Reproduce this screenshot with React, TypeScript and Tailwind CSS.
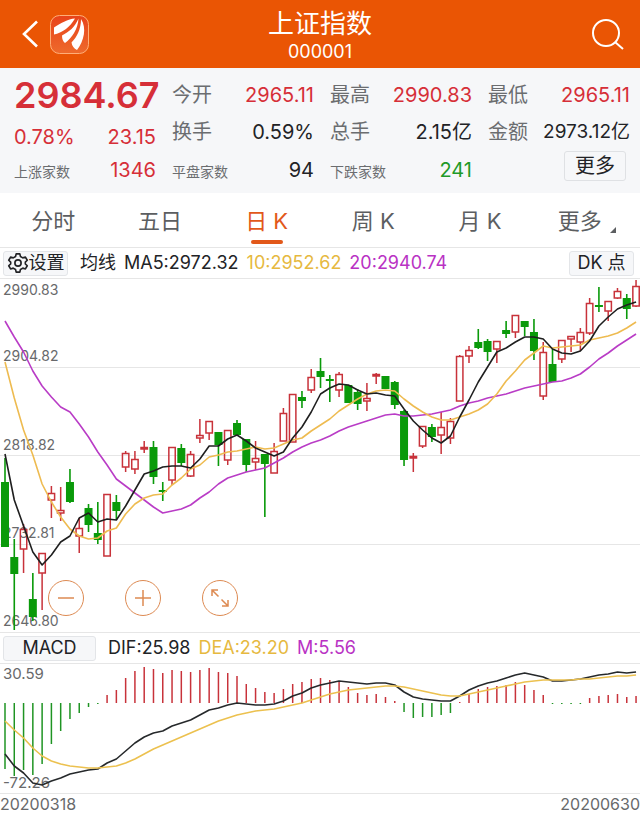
import React from 'react';

// [direction, high, body top, body bottom, low], in chart units
type Candle = ['up' | 'down', number, number, number, number];

const STEP = 9.28;
const xAt = (i: number) => 5 + i * STEP;

const candles: Candle[] = [
  ['down', 180, 204, 269, 269], ['down', 261, 279, 296, 352], ['up', 246, 251, 271, 295], ['down', 295, 321, 339, 343],
  ['up', 275, 275, 295, 332], ['up', 208, 215, 222, 240], ['up', 209, 232, 235, 243], ['down', 191, 204, 224, 225],
  ['up', 240, 250, 258, 275], ['down', 226, 230, 247, 254], ['down', 224, 255, 262, 266], ['up', 216, 216, 278, 278],
  ['down', 217, 224, 233, 242], ['up', 173, 175, 189, 194], ['up', 173, 181, 191, 196], ['up', 163, 169, 171, 175],
  ['down', 163, 169, 199, 206], ['down', 204, 212, 214, 223], ['up', 169, 169, 202, 207], ['down', 166, 170, 185, 188],
  ['up', 173, 176, 198, 199], ['up', 141, 157, 160, 165], ['up', 143, 143, 155, 162], ['down', 154, 154, 167, 188],
  ['up', 152, 152, 182, 187], ['down', 142, 145, 157, 157], ['down', 161, 161, 187, 194], ['up', 163, 180, 184, 192],
  ['down', 176, 176, 186, 239], ['up', 165, 173, 195, 195], ['up', 130, 135, 163, 163], ['up', 116, 116, 164, 164],
  ['down', 113, 119, 123, 130], ['up', 91, 99, 112, 115], ['down', 80, 93, 99, 110], ['down', 97, 101, 103, 124],
  ['up', 94, 96, 112, 119], ['down', 107, 107, 125, 125], ['down', 111, 114, 126, 132], ['up', 105, 120, 123, 133],
  ['up', 95, 96, 98, 106], ['down', 98, 98, 111, 111], ['down', 103, 104, 127, 131], ['down', 132, 133, 182, 188],
  ['up', 175, 178, 180, 194], ['up', 148, 148, 168, 170], ['down', 146, 149, 159, 164], ['up', 134, 149, 157, 176],
  ['up', 140, 143, 160, 166], ['up', 77, 78, 123, 123], ['up', 68, 72, 78, 85], ['down', 51, 64, 70, 71],
  ['down', 61, 63, 74, 83], ['up', 63, 63, 71, 85], ['down', 43, 52, 56, 60], ['up', 37, 37, 54, 60],
  ['down', 43, 43, 49, 58], ['down', 41, 54, 73, 82], ['up', 64, 74, 118, 122], ['down', 71, 86, 104, 104],
  ['up', 62, 62, 81, 85], ['up', 58, 58, 61, 74], ['up', 50, 54, 64, 73], ['up', 20, 25, 55, 57],
  ['down', 9, 27, 29, 34], ['up', 23, 23, 33, 43], ['up', 10, 13, 20, 21], ['down', 16, 20, 31, 41],
  ['up', 2, 8, 28, 29],
];

const ma5 = [
  176, 222, 248, 274, 287, 277, 264, 258, 240, 235, 244, 241, 242, 228, 212, 196, 193, 189, 188, 188, 190, 181, 168, 168,
  161, 157, 163, 170, 174, 178, 174, 160, 149, 134, 116, 110, 106, 107, 112, 116, 115, 117, 118, 131, 143, 152, 160, 165,
  158, 139, 122, 104, 89, 74, 70, 64, 59, 59, 61, 71, 75, 76, 73, 63, 48, 39, 31, 27, 24,
];
const ma10 = [
  84, 120, 152, 177, 206, 224, 239, 251, 258, 261, 260, 253, 250, 236, 226, 220, 217, 216, 207, 200, 191, 187, 179, 177,
  174, 173, 171, 169, 171, 170, 166, 162, 160, 153, 147, 141, 133, 127, 121, 116, 113, 112, 113, 121, 128, 134, 139, 142,
  142, 139, 136, 132, 126, 116, 103, 93, 82, 75, 68, 70, 69, 68, 67, 62, 60, 58, 55, 50, 44,
];
const ma20 = [
  43, 59, 74, 93, 108, 119, 129, 134, 146, 159, 174, 187, 201, 208, 215, 222, 229, 235, 233, 231, 227, 220, 214, 206, 200,
  197, 194, 192, 190, 185, 180, 174, 169, 165, 162, 158, 153, 149, 146, 143, 140, 137, 136, 138, 138, 137, 136, 134, 132,
  128, 125, 123, 120, 118, 116, 113, 110, 108, 106, 104, 103, 100, 96, 89, 81, 75, 68, 62, 56,
];

const MACD_ZERO = 40;
const macd = [
  106, 113, 107, 112, 101, 81, 68, 56, 50, 44, 41, 32, 27, 15, 8, 4, 6, 10, 7, 8, 9, 7, 5, 9, 10, 13, 21, 25, 29, 30, 26,
  21, 19, 16, 15, 17, 18, 24, 30, 32, 31, 34, 38, 49, 55, 54, 54, 52, 50, 39, 31, 26, 24, 23, 22, 19, 22, 27, 32, 41, 41,
  41, 41, 35, 33, 32, 31, 34, 33,
];
const dif = [
  91, 103, 110, 120, 122, 118, 115, 111, 109, 107, 106, 100, 96, 88, 80, 74, 70, 68, 63, 60, 57, 52, 47, 45, 42, 40, 41,
  42, 42, 41, 38, 33, 30, 25, 22, 20, 18, 19, 20, 21, 20, 20, 22, 29, 34, 36, 37, 38, 38, 33, 27, 23, 20, 18, 15, 12, 10,
  12, 14, 18, 18, 17, 16, 14, 12, 11, 9, 10, 9,
];
const dea = [
  58, 67, 75, 85, 93, 98, 101, 103, 104, 105, 105, 104, 103, 100, 96, 91, 86, 82, 78, 74, 70, 66, 62, 58, 55, 52, 50, 48,
  47, 46, 44, 42, 40, 37, 34, 31, 29, 27, 26, 25, 24, 23, 23, 24, 26, 28, 30, 32, 33, 33, 31, 29, 27, 25, 23, 21, 19, 18,
  17, 17, 17, 17, 16, 16, 15, 14, 13, 13, 12,
];

const toPoints = (values: number[]) => values.map((v, i) => `${xAt(i)},${v}`).join(' ');

const Line: React.FC<{ values: number[]; color: string }> = ({ values, color }) => (
  <polyline points={toPoints(values)} fill="none" stroke={color} strokeWidth="1.6" strokeLinejoin="round" />
);

const Logo = () => (
  <svg viewBox="0 0 39 39" className="h-[39px] w-[39px]" aria-hidden="true">
    <defs>
      <linearGradient id="logo" x1="0" y1="0" x2="0" y2="1">
        <stop offset="0" stopColor="#e8431a" />
        <stop offset="1" stopColor="#ee6a2c" />
      </linearGradient>
    </defs>
    <rect x="0.5" y="0.5" width="38" height="38" rx="9" fill="url(#logo)" stroke="#ffae78" />
    <path d="M25 3.5C18 4 10 8.500 4 12.5V19.5C12 18 20 12 25 3.5Z" fill="#fff" />
    <path d="M28.500 3.5C25 12 19 17 12 20.500C12 24 13 26.500 15 28C22 23 28 14 28.500 3.500Z" fill="#fff" />
    <path d="M31 4C31 14 27 22 21.500 27.500C22 31 24 33.500 27 35C34 26 37 13 31 4Z" fill="#fff" />
  </svg>
);

interface StatProps {
  label: string;
  value: string;
  color: string;
  small?: boolean;
  tight?: boolean;
}

const Stat: React.FC<StatProps> = ({ label, value, color, small, tight }) => (
  <div className="flex items-center justify-between whitespace-nowrap">
    <span className={small ? 'pt-1 text-sm text-[#6b6d70]' : 'text-[20px] text-[#6b6d70]'}>{label}</span>
    <span className={`${tight ? 'text-[19px]' : 'text-[20px]'} ${color}`}>{value}</span>
  </div>
);

const tabs = ['分时', '五日', '日 K', '周 K', '月 K', '更多'];
const prices = ['2904.82', '2818.82', '2732.81', '2646.80'];

const RED = 'text-[#d62f38]';
const DARK = 'text-[#222326]';

const CandleChart = () => (
  <svg viewBox="0 1 640 353" className="block h-auto w-full" role="img" aria-label="日K线图">
    {[89, 177, 266].map((y) => (
      <line key={y} x1="0" x2="640" y1={y + 0.5} y2={y + 0.5} stroke="#e6e6e6" />
    ))}
    {candles.map(([dir, high, top, bottom, low], i) => {
      const x = xAt(i);
      if (dir === 'down') {
        return (
          <g key={i} fill="#0a9a0a">
            <rect x={x - 0.8} y={high} width="1.6" height={low - high} />
            <rect x={x - 4} y={top} width="8" height={bottom - top} />
          </g>
        );
      }
      return (
        <g key={i} stroke="#c8323a" strokeWidth="1.5" fill="none">
          <path d={`M${x} ${high}V${top}M${x} ${bottom}V${low}`} />
          <rect x={x - 3.2} y={top + 0.5} width="6.4" height={bottom - top - 0.5} />
        </g>
      );
    })}
    <Line values={ma20} color="#b93cc6" />
    <Line values={ma10} color="#eebb50" />
    <Line values={ma5} color="#1f1f1f" />
  </svg>
);

const MacdChart = () => (
  <svg viewBox="0 1 640 129" className="block h-auto w-full" role="img" aria-label="MACD">
    {macd.map((y, i) => (
      <line
        key={i}
        x1={xAt(i)}
        x2={xAt(i)}
        y1={MACD_ZERO}
        y2={y}
        stroke={y > MACD_ZERO ? '#1f9423' : '#c8323a'}
        strokeWidth="1.5"
      />
    ))}
    <Line values={dif} color="#26292b" />
    <Line values={dea} color="#ecc14f" />
  </svg>
);

const zoomButton = 'flex h-9 w-9 items-center justify-center rounded-full border border-[#dd8a52]';

const App = () => {
  return (
    <div className="bg-white font-['Inter','Noto_Sans_CJK_SC',sans-serif] text-[#222326]">
      <header className="grid h-[68px] grid-cols-[1fr_auto_1fr] items-center bg-[#ea5504] px-4 text-white">
        <div className="flex items-center gap-2.5 pl-1">
          <button aria-label="返回">
            <svg viewBox="0 0 20 28" className="h-7 w-5" fill="none" stroke="#fff" strokeWidth="2.6">
              <path d="M17 1.5L4 14L17 26.5" />
            </svg>
          </button>
          <Logo />
        </div>
        <div className="pt-1 text-center">
          <h1 className="text-[26px] leading-8 font-normal">上证指数</h1>
          <p className="text-lg leading-6">000001</p>
        </div>
        <button aria-label="搜索" className="justify-self-end">
          <svg viewBox="0 0 32 32" className="h-8 w-8" fill="none" stroke="#fff" strokeWidth="2">
            <circle cx="14" cy="15" r="13" />
            <path d="M23 24L31 31" />
          </svg>
        </button>
      </header>

      <section className="grid h-[125px] grid-cols-4 grid-rows-3 gap-x-4 bg-[#f6f7f9] pt-2 pr-2.5 pb-1 pl-3.5">
        <div className={`flex items-center text-[36px] leading-9 font-semibold whitespace-nowrap ${RED}`}>2984.67</div>
        <Stat label="今开" value="2965.11" color={RED} />
        <Stat label="最高" value="2990.83" color={RED} />
        <Stat label="最低" value="2965.11" color={RED} />

        <div className={`flex items-center justify-between pt-2 text-[20px] ${RED}`}>
          <span>0.78%</span>
          <span>23.15</span>
        </div>
        <Stat label="换手" value="0.59%" color={DARK} />
        <Stat label="总手" value="2.15亿" color={DARK} />
        <Stat label="金额" value="2973.12亿" color={DARK} tight />

        <Stat label="上涨家数" value="1346" color={RED} small />
        <Stat label="平盘家数" value="94" color={DARK} small />
        <Stat label="下跌家数" value="241" color="text-[#1f9a28]" small />
        <div className="flex items-start justify-end pr-1">
          <button className="h-[30px] w-[62px] rounded-[3px] border border-[#dfe1e4] text-[20px] leading-7">更多</button>
        </div>
      </section>

      <nav className="grid h-[55px] grid-cols-6 border-b border-[#e6e6e6] text-[22px] text-[#5c5e61]">
        {tabs.map((tab) => {
          const active = tab === '日 K';
          return (
            <button key={tab} className={`flex flex-col items-center pt-3 ${active ? 'text-[#e2581a]' : ''}`}>
              <span className="flex items-end gap-2 leading-8">
                {tab}
                {tab === '更多' && (
                  <svg viewBox="0 0 6 6" className="mb-1 h-1.5 w-1.5" fill="#5c5e61">
                    <path d="M6 0V6H0Z" />
                  </svg>
                )}
              </span>
              {active && <span className="mt-[3px] h-1 w-8 rounded-full bg-[#e2581a]" />}
            </button>
          );
        })}
      </nav>

      <div className="flex h-[31px] items-center gap-2 border-b border-[#e6e6e6] pr-1.5 pl-[3px] text-lg whitespace-nowrap">
        <button className="mr-1 flex h-[25px] w-[65px] items-center justify-center rounded-[3px] border border-[#e3e5e8] bg-[#f6f7f9]">
          <svg viewBox="0 0 24 24" className="h-[22px] w-[22px] shrink-0" fill="none" stroke="#222326" strokeWidth="1.8" strokeLinejoin="round">
            <path d="M10 2H14L14.7 5L17.2 6.4L20.1 5.5L22.1 9L20 11V13L22.1 15L20.1 18.5L17.2 17.6L14.7 19L14 22H10L9.3 19L6.8 17.6L3.9 18.5L1.9 15L4 13V11L1.9 9L3.9 5.5L6.8 6.4L9.3 5Z" />
            <circle cx="12" cy="12" r="3.4" />
          </svg>
          设置
        </button>
        <span>均线</span>
        <span>MA5:2972.32</span>
        <span className="text-[#e6b93f]">10:2952.62</span>
        <span className="text-[#b932c4]">20:2940.74</span>
        <button className="ml-auto h-[25px] w-[65px] rounded-[3px] border border-[#e3e5e8] bg-[#f6f7f9] leading-5">DK 点</button>
      </div>

      <div className="relative border-b border-[#e6e6e6]">
        <div className="absolute inset-0 grid grid-rows-4 pl-[3px] text-sm leading-[22px] text-[#68696b]">
          {prices.map((price, i) => (
            <div key={price} className="flex flex-col justify-end">
              {i === 0 && <span className="mb-auto">2990.83</span>}
              <span>{price}</span>
            </div>
          ))}
        </div>
        <div className="relative">
          <CandleChart />
        </div>
        <div className="absolute bottom-4 left-12 flex gap-[41px]">
          <button aria-label="缩小" className={zoomButton}>
            <svg viewBox="0 0 18 18" className="h-[18px] w-[18px]" stroke="#dd8a52" strokeWidth="1.5">
              <path d="M1 9H17" />
            </svg>
          </button>
          <button aria-label="放大" className={zoomButton}>
            <svg viewBox="0 0 18 18" className="h-[18px] w-[18px]" stroke="#dd8a52" strokeWidth="1.5">
              <path d="M1 9H17M9 1V17" />
            </svg>
          </button>
          <button aria-label="全屏" className={zoomButton}>
            <svg viewBox="0 0 18 18" className="h-[18px] w-[18px]" fill="none" stroke="#dd8a52" strokeWidth="1.5">
              <path d="M1 7V1H7M1 1L7.5 7.5M17 11V17H11M17 17L10.5 10.5" />
            </svg>
          </button>
        </div>
      </div>

      <div className="flex h-[31px] items-center gap-2 border-b border-[#e6e6e6] pl-[3px] text-lg whitespace-nowrap">
        <button className="mr-1 h-[25px] w-[93px] rounded-[3px] border border-[#e3e5e8] bg-[#f6f7f9] leading-5">MACD</button>
        <span>DIF:25.98</span>
        <span className="text-[#e6b93f]">DEA:23.20</span>
        <span className="text-[#b932c4]">M:5.56</span>
      </div>

      <div className="relative border-b border-[#e6e6e6]">
        <div className="absolute inset-0 flex flex-col justify-between pl-[3px] text-[15px] leading-[20px] text-[#68696b]">
          <span>30.59</span>
          <span>-72.26</span>
        </div>
        <div className="relative">
          <MacdChart />
        </div>
      </div>

      <div className="flex justify-between text-base leading-[21px] text-[#68696b]">
        <span>20200318</span>
        <span>20200630</span>
      </div>
    </div>
  );
};

export default App;
